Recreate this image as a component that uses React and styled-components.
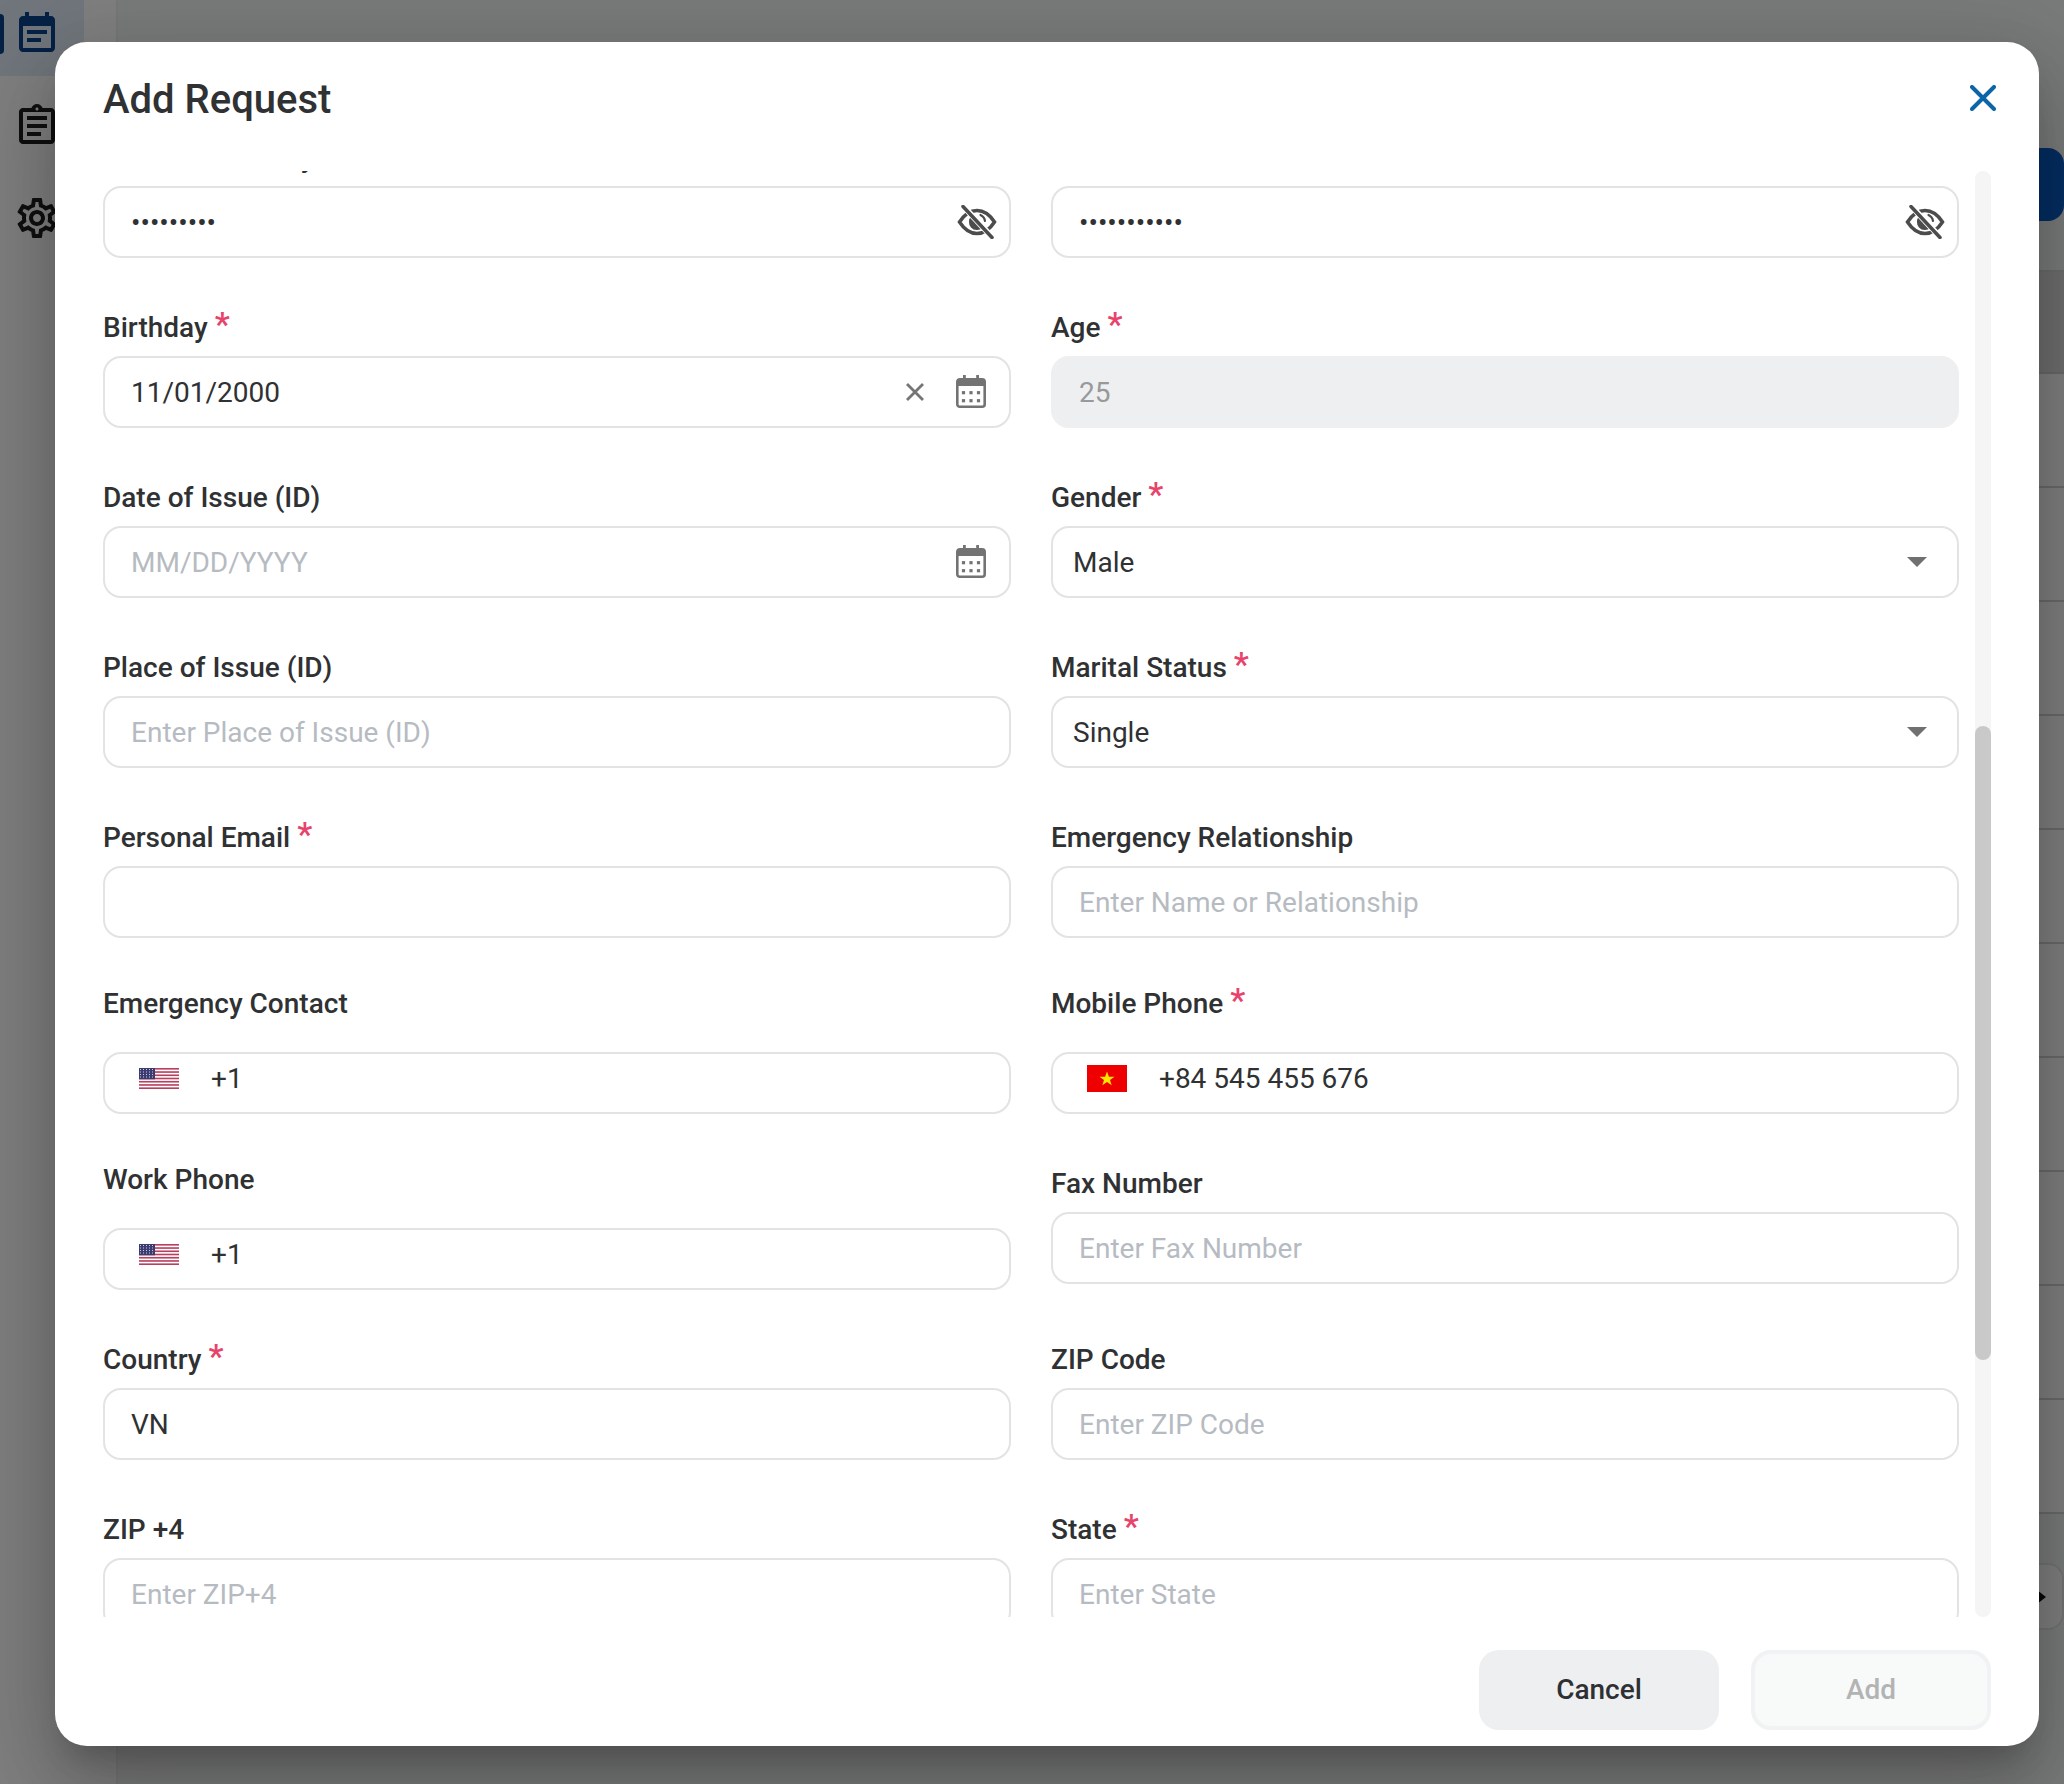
import React from "react";
import styled, { createGlobalStyle } from "styled-components";

const Global = createGlobalStyle`
  html, body { margin: 0; padding: 0; width: 2064px; height: 1784px; overflow: hidden; background: #fff; }
  body { font-family: Roboto, "Liberation Sans", Arial, sans-serif; }
  * { box-sizing: border-box; }
`;

const Page = styled.div`
  position: relative;
  display: flex;
  width: 2064px;
  height: 1784px;
  overflow: hidden;
  background: #f3f5f5;
`;
const Sidebar = styled.nav`
  flex: 0 0 118px;
  margin-top: -8px;
  display: flex;
  flex-direction: column;
  gap: 8px;
  background: #fff;
  border-right: 2px solid #eceeef;
`;
const NavItem = styled.div`
  position: relative;
  width: 84px;
  height: 84px;
  padding-left: 13px;
  display: flex;
  align-items: center;
  border-radius: 0 8px 8px 0;
  background: ${(p) => (p.$active ? "#e1ecf6" : "transparent")};
  color: ${(p) => (p.$active ? "#0b4288" : "#1f1f1f")};
  &::before {
    content: "";
    display: ${(p) => (p.$active ? "block" : "none")};
    position: absolute;
    left: 0;
    top: 22px;
    width: 4px;
    height: 40px;
    border-radius: 0 4px 4px 0;
    background: #0b4288;
  }
`;
const Main = styled.main`
  flex: 1;
  min-width: 0;
  padding-top: 148px;
  display: flex;
  flex-direction: column;
`;
const Toolbar = styled.div`
  display: flex;
  justify-content: flex-end;
  margin-bottom: 49px;
`;
const PrimaryButton = styled.div`
  width: 300px;
  height: 73px;
  border-radius: 16px;
  background: #0b5cc4;
`;
const TableHead = styled.div`
  height: 104px;
  background: #dcdcdc;
  border-top: 2px solid #d6d6d6;
  border-bottom: 2px solid #d0d0d0;
`;
const TableRow = styled.div`
  height: 114px;
  background: #fff;
  border-bottom: 2px solid #d4d4d4;
`;
const Pager = styled.div`
  margin-top: 49px;
  height: 67px;
  display: flex;
  align-items: center;
  justify-content: flex-end;
  padding-right: 16px;
  background: #fff;
  border: 2px solid #e6e6e6;
  border-radius: 0 16px 16px 0;
  color: #111;
`;

const Overlay = styled.div`
  position: absolute;
  inset: 0;
  background: rgba(0, 0, 0, 0.5);
`;
const Modal = styled.section`
  position: absolute;
  left: 55px;
  top: 42px;
  width: 1984px;
  height: 1704px;
  display: flex;
  flex-direction: column;
  background: #fff;
  border-radius: 32px;
  box-shadow: 0 22px 30px -14px rgba(0,0,0,.2), 0 48px 76px 6px rgba(0,0,0,.14), 0 18px 92px 16px rgba(0,0,0,.12);
`;
const Header = styled.header`
  flex: 0 0 129px;
  height: 129px;
  padding: 0 43px 17px 48px;
  display: flex;
  align-items: center;
  justify-content: space-between;
`;
const Title = styled.h2`
  margin: 4px 0 0;
  font-size: 40px;
  font-weight: 500;
  line-height: 56px;
  color: #2f3133;
`;
const Body = styled.div`
  flex: 1;
  min-height: 0;
  display: flex;
  gap: 16px;
  padding: 0 48px 0 48px;
`;
const Scroller = styled.div`
  flex: 1;
  min-width: 0;
  overflow: hidden;
`;
const FormGrid = styled.div`
  margin-top: -37px;
  display: grid;
  grid-template-columns: 1fr 1fr;
  column-gap: 40px;
  row-gap: 46px;
  align-items: start;
`;
const Track = styled.div`
  flex: 0 0 16px;
  border-radius: 8px;
  background: #f5f5f5;
  overflow: hidden;
`;
const Thumb = styled.div`
  margin-top: 555px;
  height: 634px;
  border-radius: 8px;
  background: #c9c9c9;
`;
const Footer = styled.footer`
  flex: 0 0 129px;
  padding: 33px 48px 0 0;
  display: flex;
  justify-content: flex-end;
  gap: 32px;
`;
const Button = styled.button`
  width: 240px;
  height: 80px;
  padding: 0 0 2px;
  border-radius: 20px;
  font-family: inherit;
  font-size: 28px;
  font-weight: 500;
  border: ${(p) => (p.$muted ? "4px solid #f1f2f3" : "none")};
  background: ${(p) => (p.$muted ? "#f8f9f9" : "#eeeff1")};
  color: ${(p) => (p.$muted ? "#b2b4b4" : "#2e3033")};
`;

const Field = styled.div`
  display: flex;
  flex-direction: column;
  min-width: 0;
`;
const Label = styled.div`
  height: 44px;
  padding-top: 2px;
  display: flex;
  align-items: center;
  font-size: 28px;
  font-weight: 500;
  color: #2f3133;
  margin-top: ${(p) => (p.$phone ? "-4px" : "0")};
  margin-bottom: ${(p) => (p.$phone ? "28px" : "8px")};
`;
const Star = styled.span`
  margin-left: 7px;
  font-size: 34px;
  font-weight: 500;
  line-height: 1;
  color: #e8436a;
  position: relative;
  top: -3px;
`;
const InputBox = styled.div`
  height: ${(p) => (p.$phone ? "62px" : "72px")};
  display: flex;
  align-items: center;
  padding-left: ${(p) => (p.$select ? "20px" : p.$phone ? "34px" : "26px")};
  padding-right: ${(p) => p.$pr || 25}px;
  padding-bottom: ${(p) => (p.$phone ? "10px" : "0")};
  border: ${(p) => (p.$disabled ? "2px solid #eeeff1" : "2px solid #e3e3e3")};
  border-radius: 18px;
  background: ${(p) => (p.$disabled ? "#eeeff1" : "#fff")};
`;
const Value = styled.span`
  flex: 1;
  min-width: 0;
  padding-top: 2px;
  font-size: 28px;
  line-height: 36px;
  white-space: nowrap;
  color: ${(p) => (p.$disabled ? "#97999b" : "#2f3133")};
`;
const Placeholder = styled(Value)`
  color: #b6bbc2;
`;
const Dots = styled(Value)`
  font-size: 28px;
  letter-spacing: 0;
`;
const Actions = styled.div`
  display: flex;
  align-items: center;
  gap: 32px;
  margin-bottom: 1px;
`;
const FlagSlot = styled.span`
  display: flex;
  margin-right: 32px;
`;

const EventNoteIcon = () => (
  <svg width="48" height="48" viewBox="0 0 24 24" fill="currentColor">
    <path d="M17 10H7v2h10v-2zm2-7h-1V1h-2v2H8V1H6v2H5c-1.11 0-1.99.9-1.99 2L3 19c0 1.1.89 2 2 2h14c1.1 0 2-.9 2-2V5c0-1.1-.9-2-2-2zm0 16H5V8h14v11zm-5-5H7v2h7v-2z" />
  </svg>
);
const AssignmentIcon = () => (
  <svg width="48" height="48" viewBox="0 0 24 24" fill="currentColor">
    <path d="M7 15h7v2H7zm0-4h10v2H7zm0-4h10v2H7zm12-4h-4.18C14.4 1.84 13.3 1 12 1c-1.3 0-2.4.84-2.82 2H5c-.14 0-.27.01-.4.04-.39.08-.74.28-1.01.55-.18.18-.33.4-.43.64-.1.23-.16.49-.16.77v14c0 .27.06.54.16.78s.25.45.43.64c.27.27.62.47 1.01.55.13.02.26.03.4.03h14c1.1 0 2-.9 2-2V5c0-1.1-.9-2-2-2zm-7-.25c.41 0 .75.34.75.75s-.34.75-.75.75-.75-.34-.75-.75.34-.75.75-.75zM19 19H5V5h14v14z" />
  </svg>
);
const SettingsIcon = () => (
  <svg width="48" height="48" viewBox="0 0 24 24" fill="currentColor">
    <path d="M19.43 12.98c.04-.32.07-.64.07-.98 0-.34-.03-.66-.07-.98l2.11-1.65c.19-.15.24-.42.12-.64l-2-3.46c-.09-.16-.26-.25-.44-.25-.06 0-.12.01-.17.03l-2.49 1c-.52-.4-1.08-.73-1.69-.98l-.38-2.65C14.46 2.18 14.25 2 14 2h-4c-.25 0-.46.18-.49.42l-.38 2.65c-.61.25-1.17.59-1.69.98l-2.49-1c-.06-.02-.12-.03-.18-.03-.17 0-.34.09-.43.25l-2 3.46c-.13.22-.07.49.12.64l2.11 1.65c-.04.32-.07.65-.07.98 0 .33.03.66.07.98l-2.11 1.65c-.19.15-.24.42-.12.64l2 3.46c.09.16.26.25.44.25.06 0 .12-.01.17-.03l2.49-1c.52.4 1.08.73 1.69.98l.38 2.65c.03.24.24.42.49.42h4c.25 0 .46-.18.49-.42l.38-2.65c.61-.25 1.17-.59 1.69-.98l2.49 1c.06.02.12.03.18.03.17 0 .34-.09.43-.25l2-3.46c.12-.22.07-.49-.12-.64l-2.11-1.65zm-1.98-1.71c.04.31.05.52.05.73 0 .21-.02.43-.05.73l-.14 1.13.89.7 1.08.84-.7 1.21-1.27-.51-1.04-.42-.9.68c-.43.32-.84.56-1.25.73l-1.06.43-.16 1.13-.2 1.35h-1.4l-.19-1.35-.16-1.13-1.06-.43c-.43-.18-.83-.41-1.23-.71l-.91-.7-1.06.43-1.27.51-.7-1.21 1.08-.84.89-.7-.14-1.13c-.03-.31-.05-.54-.05-.74s.02-.43.05-.73l.14-1.13-.89-.7-1.08-.84.7-1.21 1.27.51 1.04.42.9-.68c.43-.32.84-.56 1.25-.73l1.06-.43.16-1.13.2-1.35h1.39l.19 1.35.16 1.13 1.06.43c.43.18.83.41 1.23.71l.91.7 1.06-.43 1.27-.51.7 1.21-1.07.85-.89.7.14 1.13zM12 8c-2.21 0-4 1.79-4 4s1.79 4 4 4 4-1.79 4-4-1.79-4-4-4zm0 6c-1.1 0-2-.9-2-2s.9-2 2-2 2 .9 2 2-.9 2-2 2z" />
  </svg>
);
const CloseIcon = () => (
  <svg width="26" height="26" viewBox="0 0 26 26" fill="none" stroke="#0b66a8" strokeWidth="4" strokeLinecap="round">
    <path d="M2 2l22 22M24 2L2 24" />
  </svg>
);
const EyeOffIcon = () => (
  <svg width="40" height="34" viewBox="0 0 40 34" fill="none" stroke="#4c4c4c" strokeWidth="3.5" strokeLinecap="round">
    <path d="M2.5 17C8 8.5 14 5.5 20 5.5S32 8.5 37.5 17C32 25.5 26 28.5 20 28.5S8 25.5 2.5 17Z" />
    <path d="M14.6 11A8 8 0 0 0 25.4 23Z" fill="#4c4c4c" stroke="none" />
    <path d="M23.5 10A8 8 0 0 1 28 16" strokeWidth="2.2" />
    <path d="M7 2l28 30" stroke="#fff" strokeWidth="6" strokeLinecap="butt" />
    <path d="M6 1.5l29 31" />
  </svg>
);
const ClearIcon = () => (
  <svg width="18" height="18" viewBox="0 0 18 18" fill="none" stroke="#757575" strokeWidth="2.8">
    <path d="M1 1l16 16M17 1L1 17" />
  </svg>
);
const CalendarIcon = () => (
  <svg width="30" height="33" viewBox="0 0 30 33" fill="none">
    <rect x="1.3" y="4.3" width="27.4" height="27.4" rx="2.5" stroke="#737373" strokeWidth="2.6" />
    <path d="M1.5 5h27v6h-27zM7 0h2.8v6H7zM20.2 0H23v6h-2.8z" fill="#737373" />
    {[7.5, 15, 22.5].flatMap((x) =>
      [17.7, 25.7].map((y) => <rect key={`${x}-${y}`} x={x - 1.6} y={y - 1.6} width="3.2" height="3.2" fill="#737373" />)
    )}
  </svg>
);
const CaretIcon = () => (
  <svg width="20" height="10" viewBox="0 0 20 10" fill="#707070">
    <path d="M0 0h20L10 10z" />
  </svg>
);
const PagerArrow = () => (
  <svg width="9" height="14" viewBox="0 0 9 14" fill="currentColor">
    <path d="M0 0l9 7-9 7z" />
  </svg>
);
const UsFlag = () => (
  <svg width="40" height="21" viewBox="0 0 40 21">
    <rect width="40" height="21" fill="#fff" />
    {[0, 2, 4, 6, 8, 10, 12].map((i) => (
      <rect key={i} y={(i * 21) / 13} width="40" height={21 / 13} fill="#b8405e" />
    ))}
    <rect width="16" height="11.3" fill="#3c3b6e" />
    {[1.5, 4, 6.5, 9].flatMap((y) =>
      [1.5, 4.5, 7.5, 10.5, 13.5].map((x) => <rect key={`${x}-${y}`} x={x - 0.5} y={y - 0.5} width="1" height="1" fill="#c9cde0" />)
    )}
  </svg>
);
const VnFlag = () => (
  <svg width="40" height="27" viewBox="0 0 40 27">
    <rect width="40" height="27" fill="#ee0000" />
    <path d="M20 6.5l1.9 5.2h5.6l-4.5 3.3 1.7 5.3-4.7-3.2-4.7 3.2 1.7-5.3-4.5-3.3h5.6z" fill="#ffe600" />
  </svg>
);

const FIELDS = [
  { label: "Personal Identity Number", kind: "password", value: "•••••••••" },
  { label: "National ID Number", kind: "password", value: "•••••••••••" },
  { label: "Birthday", required: true, kind: "date", value: "11/01/2000", clearable: true },
  { label: "Age", required: true, kind: "text", value: "25", disabled: true },
  { label: "Date of Issue (ID)", kind: "date", placeholder: "MM/DD/YYYY" },
  { label: "Gender", required: true, kind: "select", value: "Male" },
  { label: "Place of Issue (ID)", kind: "text", placeholder: "Enter Place of Issue (ID)" },
  { label: "Marital Status", required: true, kind: "select", value: "Single" },
  { label: "Personal Email", required: true, kind: "text" },
  { label: "Emergency Relationship", kind: "text", placeholder: "Enter Name or Relationship" },
  { label: "Emergency Contact", kind: "phone", flag: "us", value: "+1" },
  { label: "Mobile Phone", required: true, kind: "phone", flag: "vn", value: "+84 545 455 676" },
  { label: "Work Phone", kind: "phone", flag: "us", value: "+1" },
  { label: "Fax Number", kind: "text", placeholder: "Enter Fax Number" },
  { label: "Country", required: true, kind: "text", value: "VN" },
  { label: "ZIP Code", kind: "text", placeholder: "Enter ZIP Code" },
  { label: "ZIP +4", kind: "text", placeholder: "Enter ZIP+4" },
  { label: "State", required: true, kind: "text", placeholder: "Enter State" },
];

function FormField({ field }) {
  const { label, required, kind, value, placeholder, disabled, clearable, flag } = field;
  const phone = kind === "phone";
  const paddingRight = kind === "password" ? 12 : kind === "select" ? 30 : 23;
  const Text = kind === "password" ? Dots : Value;
  return (
    <Field>
      <Label $phone={phone}>
        {label}
        {required && <Star>*</Star>}
      </Label>
      <InputBox $phone={phone} $select={kind === "select"} $disabled={disabled} $pr={paddingRight}>
        {phone && <FlagSlot>{flag === "vn" ? <VnFlag /> : <UsFlag />}</FlagSlot>}
        {value ? <Text $disabled={disabled}>{value}</Text> : <Placeholder>{placeholder}</Placeholder>}
        {kind === "password" && <EyeOffIcon />}
        {kind === "select" && <CaretIcon />}
        {kind === "date" && (
          <Actions>
            {clearable && <ClearIcon />}
            <CalendarIcon />
          </Actions>
        )}
      </InputBox>
    </Field>
  );
}

export default function App() {
  return (
    <Page>
      <Global />
      <Sidebar>
        <NavItem $active><EventNoteIcon /></NavItem>
        <NavItem><AssignmentIcon /></NavItem>
        <NavItem><SettingsIcon /></NavItem>
      </Sidebar>
      <Main>
        <Toolbar><PrimaryButton /></Toolbar>
        <TableHead />
        {Array.from({ length: 10 }, (_, i) => <TableRow key={i} />)}
        <Pager><PagerArrow /></Pager>
      </Main>
      <Overlay />
      <Modal>
        <Header>
          <Title>Add Request</Title>
          <CloseIcon />
        </Header>
        <Body>
          <Scroller>
            <FormGrid>
              {FIELDS.map((f) => <FormField key={f.label} field={f} />)}
            </FormGrid>
          </Scroller>
          <Track><Thumb /></Track>
        </Body>
        <Footer>
          <Button>Cancel</Button>
          <Button $muted disabled>Add</Button>
        </Footer>
      </Modal>
    </Page>
  );
}
